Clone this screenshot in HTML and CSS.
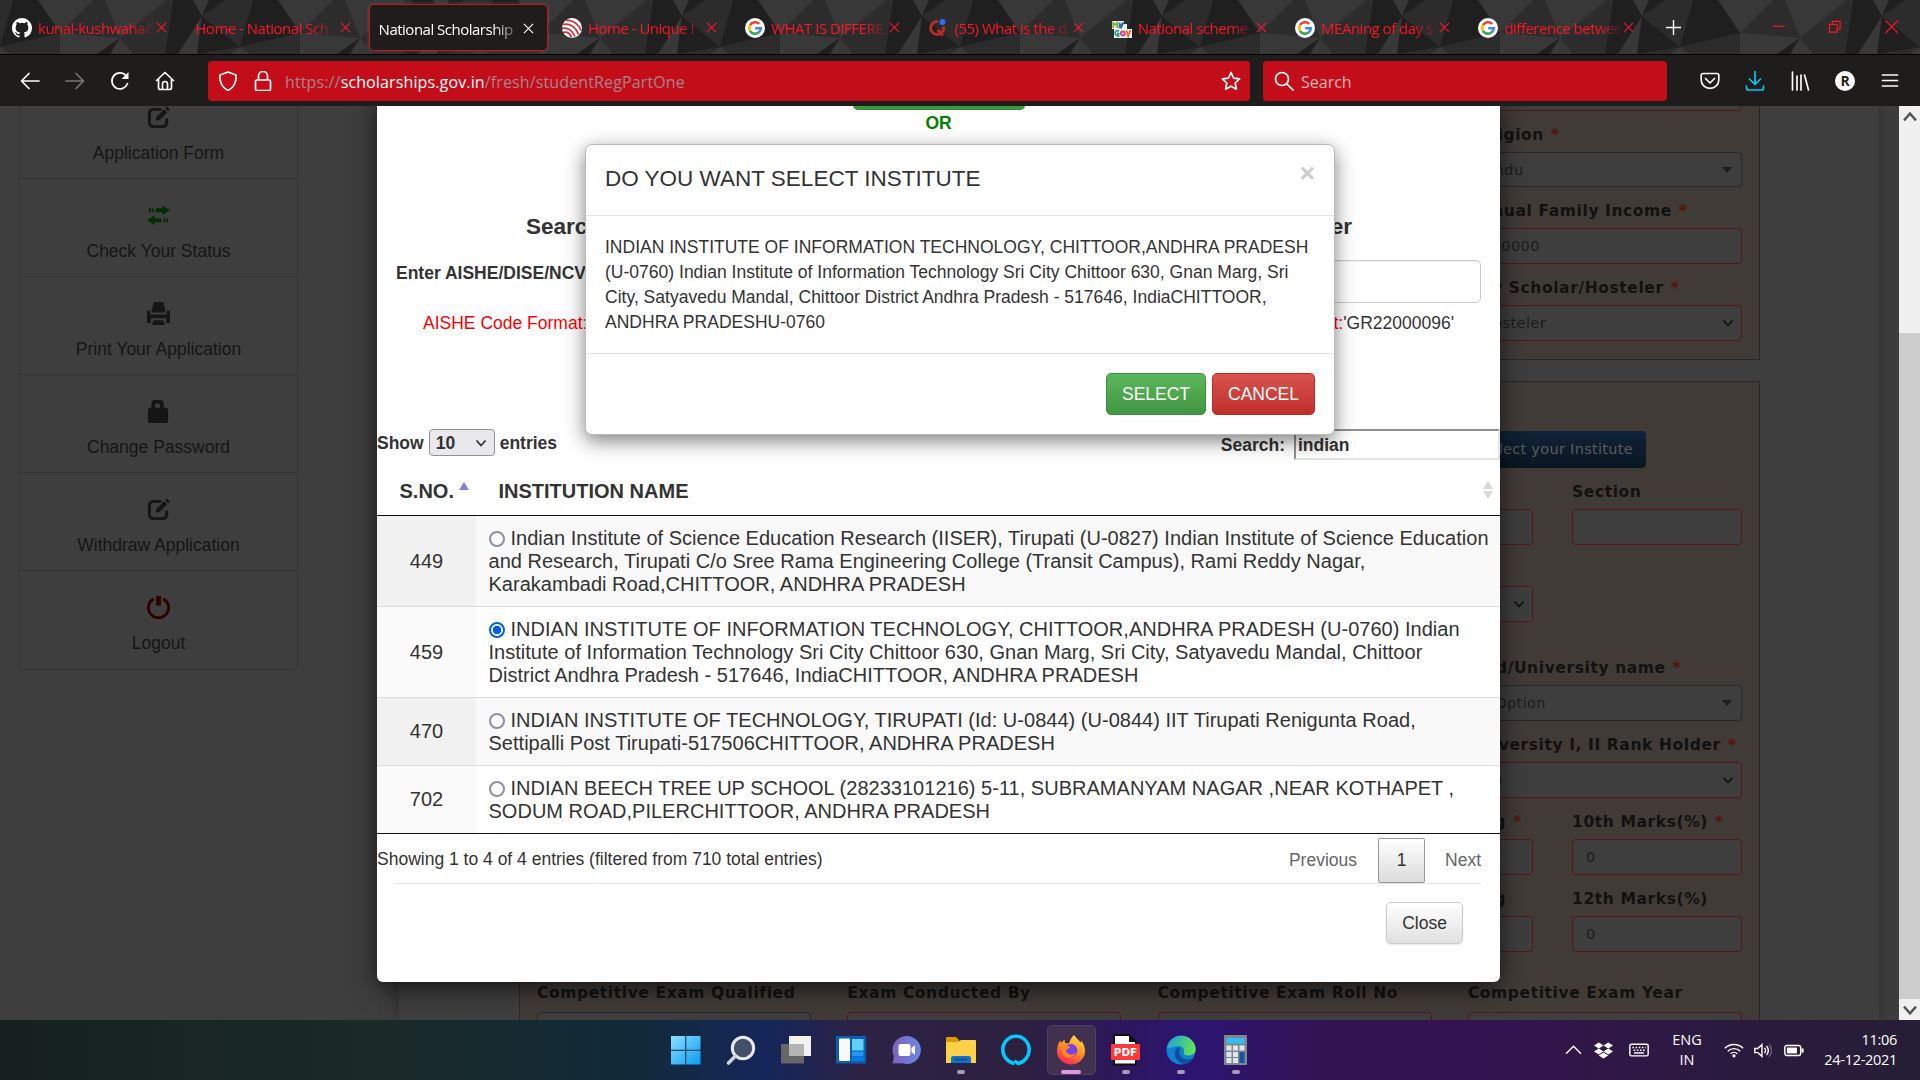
FILE: index.html
```html
<!DOCTYPE html>
<html lang="en">
<head>
<meta charset="utf-8">
<title>National Scholarship Portal</title>
<link rel="stylesheet" href="styles.css">
</head>
<body>
<svg class="defs" width="0" height="0">
  <defs>
    <symbol id="x" viewBox="0 0 12 12"><path d="M1 1l10 10M11 1L1 11" fill="none" stroke="currentColor" stroke-width="1.2"/></symbol>
    <symbol id="google" viewBox="0 0 20 20"><circle cx="10" cy="10" r="10" fill="#fff"/><g fill="none" stroke-width="2.6"><path d="M14.2 5.9A5.8 5.8 0 0 0 5 7.2" stroke="#ea4335"/><path d="M5 7.2a5.8 5.8 0 0 0 0 5.6" stroke="#fbbc05"/><path d="M5 12.8a5.8 5.8 0 0 0 8.8 1.5" stroke="#34a853"/><path d="M13.8 14.3a5.8 5.8 0 0 0 2-4.1h-5.6" stroke="#4285f4"/></g></symbol>
    <symbol id="edit" viewBox="0 0 24 24"><path d="M15 3.5H6.5a4 4 0 0 0-4 4v10a4 4 0 0 0 4 4h10a4 4 0 0 0 4-4V13" fill="none" stroke="currentColor" stroke-width="3"/><path d="M9 15.5l1-4.2 7.800-7.800 3.200 3.200-7.800 7.800zM19 2.300L20.800.6l3 3L22 5.500z" fill="currentColor"/></symbol>
    <symbol id="chev" viewBox="0 0 12 12"><path d="M1.500 3.500L6 8.500l4.500-5" fill="none" stroke="currentColor" stroke-width="1.800"/></symbol>
    <pattern id="poly" x="60" y="0" width="240" height="54" patternUnits="userSpaceOnUse">
      <rect width="240" height="54" fill="#2c2c2c"/>
      <path fill="#383838" d="M240 33L218 0h22zM0 33V0h33zM0 33l60 5-23 16H0zM45 0h61L60 38zM60 38L50 54h23zM142 16l-5 38h-19zM133 0h16l-7 16zM180 47l10 7h-20z"/>
      <path fill="#1f1f1f" d="M60 38L37 54h13zM113 0h20l9 16-24 38h-13zM149 0h16l-23 16zM142 16l38 31-43 7zM193 0h25l22 33-60 14z"/>
    </pattern>
  </defs>
</svg>

<div class="tabstrip">
  <svg class="facets" width="1920" height="54"><rect width="1920" height="54" fill="url(#poly)"/></svg>
  <div class="tabs">
    <div class="tab"><svg class="fav" viewBox="0 0 16 16"><path fill="#fff" d="M8 0C3.600 0 0 3.600 0 8c0 3.500 2.300 6.500 5.500 7.600.4.100.5-.2.5-.4V13.800c-2.200.5-2.700-1-2.700-1-.4-.9-.9-1.200-.9-1.200-.7-.5.1-.5.100-.5.800.1 1.200.8 1.200.8.700 1.300 1.900.9 2.300.7.100-.5.300-.9.500-1.100C4.700 11.300 2.900 10.600 2.900 7.500c0-.9.300-1.600.8-2.100-.1-.2-.4-1 .1-2.100 0 0 .7-.2 2.200.8a7.500 7.500 0 0 1 4 0c1.500-1 2.200-.8 2.200-.8.400 1.100.2 1.900.1 2.100.5.600.8 1.300.8 2.100 0 3.100-1.900 3.700-3.600 3.900.300.300.5.800.5 1.500v2.200c0 .2.100.5.500.4A8 8 0 0 0 16 8c0-4.400-3.600-8-8-8z"/></svg><span class="name">kunal-kushwaha/l</span><svg class="tx"><use href="#x"/></svg></div>
    <div class="tab"><span class="name">Home - National Sch</span><svg class="tx"><use href="#x"/></svg></div>
    <div class="tab active"><span class="name">National Scholarship</span><svg class="tx"><use href="#x"/></svg></div>
    <div class="tab"><svg class="fav" viewBox="0 0 20 20"><circle cx="10" cy="10" r="10" fill="#fff"/><g fill="none" stroke="#d42a36" stroke-width="1.700"><path d="M4 2.500c7-1 13 4 15 10"/><path d="M1 6.500c7-2 13 3 15.500 10"/><path d="M0 10.500c6-2 11 3 13 8"/><path d="M1 14.500c4-1 7 1 8.500 5"/></g></svg><span class="name">Home - Unique I</span><svg class="tx"><use href="#x"/></svg></div>
    <div class="tab"><svg class="fav"><use href="#google"/></svg><span class="name">WHAT IS DIFFERE</span><svg class="tx"><use href="#x"/></svg></div>
    <div class="tab"><svg class="fav" viewBox="0 0 20 20"><path d="M10 3.500a6.500 6.500 0 1 0 5.500 5M9.500 12l5.500 5.500" fill="none" stroke="#b92b27" stroke-width="3"/><circle cx="14.500" cy="4" r="3" fill="#2e69ff"/></svg><span class="name">(55) What is the d</span><svg class="tx"><use href="#x"/></svg></div>
    <div class="tab"><svg class="fav" viewBox="0 0 20 20"><path d="M0 3h12v3h3v5h5v9H2v-9H0z" fill="#f4f4f4"/><g fill="none" stroke-width="1.800"><path d="M1.200 10V4.800l2 2 2-2V10" stroke="#7cb82f"/><path d="M7.500 4.500v4l4-4-3 6" stroke="#2b6fb5"/><path d="M7 13c-5-2-5 5-.5 5V15.500H5" stroke="#19a98b"/><circle cx="10.800" cy="15.500" r="2" stroke="#e6358b"/><path d="M14.500 12.500l1.700 5.500 2.300-6" stroke="#f26522"/></g></svg><span class="name">National scheme</span><svg class="tx"><use href="#x"/></svg></div>
    <div class="tab"><svg class="fav"><use href="#google"/></svg><span class="name">MEAning of day s</span><svg class="tx"><use href="#x"/></svg></div>
    <div class="tab"><svg class="fav"><use href="#google"/></svg><span class="name">difference betwee</span><svg class="tx"><use href="#x"/></svg></div>
  </div>
  <svg class="plus" viewBox="0 0 16 16"><path d="M8 0v16M0 8h16" stroke="#fff" stroke-width="1.500"/></svg>
  <div class="winctl">
    <svg viewBox="0 0 14 14"><path d="M1 6.500h12" /></svg>
    <svg viewBox="0 0 14 14"><path d="M1.500 4.500h8v8h-8zM4.500 4.500v-3h8v8h-3"/></svg>
    <svg viewBox="0 0 14 14"><path d="M.5 .5l13 13M13.500 .5l-13 13"/></svg>
  </div>
</div>

<div class="toolbar">
  <div class="navbtns">
    <svg viewBox="0 0 20 20"><path d="M19 10H2M9 2.500L1.500 10 9 17.500"/></svg>
    <svg class="off" viewBox="0 0 20 20"><path d="M1 10h17M11 2.500l7.500 7.500-7.500 7.500"/></svg>
    <svg viewBox="0 0 20 20"><path d="M17.500 12.500A8 8 0 1 1 16 4.700"/><path d="M18.500 1v7h-7z" fill="#fbfbfe" stroke="none"/></svg>
    <svg viewBox="0 0 20 20"><path d="M1.500 9.500L10 1.500l8.500 8M3.500 8v8.500a2 2 0 0 0 2 2h9a2 2 0 0 0 2-2V8M7.500 18v-5a2.500 2.500 0 0 1 5 0v5"/></svg>
  </div>
  <div class="urlbar">
    <svg viewBox="0 0 20 20"><path d="M10 1l8 3c.5 6-1.500 12-8 15.500C3.500 16 1.500 10 2 4z"/></svg>
    <svg viewBox="0 0 20 20"><path d="M4 9h12a1.500 1.500 0 0 1 1.500 1.500V18a1.500 1.500 0 0 1-1.500 1.500H4A1.500 1.500 0 0 1 2.500 18v-7.500A1.500 1.500 0 0 1 4 9zM5.500 9V5a4.500 4.500 0 0 1 9 0v4"/></svg>
    <span class="url">https://<b>scholarships.gov.in</b>/fresh/studentRegPartOne</span>
    <svg viewBox="0 0 20 20"><path d="M10 1.500l2.600 5.600 6 .7-4.400 4.200 1.200 6.200-5.400-3-5.400 3L5.800 12 1.400 7.800l6-.7z"/></svg>
  </div>
  <div class="searchbar">
    <svg viewBox="0 0 20 20"><circle cx="8" cy="8" r="6.500"/><path d="M12.800 12.800L19 19"/></svg><span>Search</span>
  </div>
  <div class="tools">
    <svg viewBox="0 0 20 20"><path d="M3 2.500h14a1.800 1.800 0 0 1 1.800 1.800V9a8.800 8.300 0 0 1-17.600 0V4.300A1.800 1.800 0 0 1 3 2.500zM5.500 7.500L10 12l4.500-4.500"/></svg>
    <svg class="dl" viewBox="0 0 20 20"><path d="M10 0v13M4.500 8l5.500 5.500L15.500 8M1.500 15v2a2 2 0 0 0 2 2h13a2 2 0 0 0 2-2v-2"/></svg>
    <svg viewBox="0 0 20 20"><path d="M2.500 1v18M7 5v14M11 4v15M14.500 4l4 15"/></svg>
    <span class="avatar">R</span>
    <svg viewBox="0 0 20 20"><path d="M2.500 4h15M2.500 9.500h15M2.500 15h15"/></svg>
  </div>
</div>

<div class="viewport">
  <div class="page">
    <nav class="side">
      <a><svg><use href="#edit"/></svg>Application Form</a>
      <a><svg class="green" viewBox="0 0 24 24"><path fill="currentColor" d="M2 4.500h2v4H2zM5 4.500h2v4H5zM9 4.500h7V1.500l8 5-8 5v-3H9zM20 15h2v4h-2zM17 15h2v4h-2zM15 15H8v-3l-8 5L8 22v-3h7z"/></svg>Check Your Status</a>
      <a><svg viewBox="0 0 24 24"><path fill="currentColor" d="M7 0h10l2 8v3H5V8zM0 9h3.500v4h17V9H24v13h-4v-5H4v5H0zM7 19h10l2 5H5z"/></svg>Print Your Application</a>
      <a><svg viewBox="0 0 24 24"><path fill="currentColor" d="M1 10a2 2 0 0 1 2-2h1.500V4a4 4 0 0 1 4-4h5a4 4 0 0 1 4 4v4H20a2 2 0 0 1 2 2v12a2 2 0 0 1-2 2H3a2 2 0 0 1-2-2zM8.500 8h5V4h-5z"/></svg>Change Password</a>
      <a><svg><use href="#edit"/></svg>Withdraw Application</a>
      <a><svg class="red" viewBox="0 0 24 24"><path fill="none" stroke="currentColor" stroke-width="3" d="M7 3a10.500 10.500 0 1 0 10 0"/><path fill="currentColor" d="M9.500 0h5v10h-5z"/></svg>Logout</a>
    </nav>
    <main class="panel">
      <section class="box first">
        <div class="col">
          <div class="in"></div>
          <label>Religion <i>*</i></label>
          <div class="in grey">Hindu<span class="tri"></span></div>
          <label>Annual Family Income <i>*</i></label>
          <div class="in">300000</div>
          <label>Day Scholar/Hosteler <i>*</i></label>
          <div class="in">Hosteler<svg><use href="#chev"/></svg></div>
        </div>
      </section>
      <section class="box second">
        <div class="wide">
          <span class="blue">Select your Institute</span>
          <div class="pair"><div><label>Course</label><div class="in"></div></div><div><label>Section</label><div class="in"></div></div></div>
          <div class="pair lone"><div class="in"><svg><use href="#chev"/></svg></div></div>
          <div class="inner">
            <label class="board">Board/University name <i>*</i></label>
            <div class="in grey opt">Select Option<span class="tri"></span></div>
            <label>University I, II Rank Holder <i>*</i></label>
            <div class="in">No<svg><use href="#chev"/></svg></div>
          </div>
          <div class="pair"><div><label>Year of Passing <i>*</i></label><div class="in"></div></div><div><label>10th Marks(%) <i>*</i></label><div class="in">0</div></div></div>
          <div class="pair"><div><label>Year of Passing</label><div class="in"></div></div><div><label>12th Marks(%)</label><div class="in">0</div></div></div>
        </div>
        <div class="exam">
          <div><label>Competitive Exam Qualified</label><div class="in grey"></div></div>
          <div><label>Exam Conducted By</label><div class="in"></div></div>
          <div><label>Competitive Exam Roll No</label><div class="in"></div></div>
          <div><label>Competitive Exam Year</label><div class="in"></div></div>
        </div>
      </section>
    </main>
  </div>

  <div class="scroll">
    <svg><use href="#chev" transform="rotate(180 8 8)"/></svg>
    <div class="thumb"></div>
    <svg><use href="#chev"/></svg>
  </div>

  <div class="modal">
    <div class="greenbtn"></div>
    <div class="or">OR</div>
    <div class="split heading"><span>Searc</span><span>er</span></div>
    <div class="split enter"><b>Enter AISHE/DISE/NCV</b><div class="code"></div></div>
    <div class="split format"><span class="r">AISHE Code Format:</span><span><span class="r">t:</span>'GR22000096'</span></div>
    <div class="controls">
      <div class="show"><span class="dn">Show</span><span class="sel"><span class="dn">10</span><svg><use href="#chev"/></svg></span><span class="dn">entries</span></div>
      <div class="find"><span class="dn">Search:</span><span class="q">indian</span></div>
    </div>
    <div class="table">
      <div class="th"><div class="c1">S.NO.<span class="up"></span></div><div class="c2">INSTITUTION NAME<svg viewBox="0 0 10 20"><path d="M5 1l5 8H0zM5 19l5-8H0z" fill="#d8d8d8"/></svg></div></div>
      <div class="tr odd"><div class="c1">449</div><div class="c2"><span class="radio"></span>Indian Institute of Science Education Research (IISER), Tirupati (U-0827) Indian Institute of Science Education<br>and Research, Tirupati C/o Sree Rama Engineering College (Transit Campus), Rami Reddy Nagar,<br>Karakambadi Road,CHITTOOR, ANDHRA PRADESH</div></div>
      <div class="tr"><div class="c1">459</div><div class="c2"><span class="radio on"></span>INDIAN INSTITUTE OF INFORMATION TECHNOLOGY, CHITTOOR,ANDHRA PRADESH (U-0760) Indian<br>Institute of Information Technology Sri City Chittoor 630, Gnan Marg, Sri City, Satyavedu Mandal, Chittoor<br>District Andhra Pradesh - 517646, IndiaCHITTOOR, ANDHRA PRADESH</div></div>
      <div class="tr odd two"><div class="c1">470</div><div class="c2"><span class="radio"></span>INDIAN INSTITUTE OF TECHNOLOGY, TIRUPATI (Id: U-0844) (U-0844) IIT Tirupati Renigunta Road,<br>Settipalli Post Tirupati-517506CHITTOOR, ANDHRA PRADESH</div></div>
      <div class="tr two"><div class="c1">702</div><div class="c2"><span class="radio"></span>INDIAN BEECH TREE UP SCHOOL (28233101216) 5-11, SUBRAMANYAM NAGAR ,NEAR KOTHAPET ,<br>SODUM ROAD,PILERCHITTOOR, ANDHRA PRADESH</div></div>
    </div>
    <div class="info"><span>Showing 1 to 4 of 4 entries (filtered from 710 total entries)</span><div class="pager"><span>Previous</span><span class="cur">1</span><span>Next</span></div></div>
    <div class="foot"><span class="close">Close</span></div>
  </div>

  <div class="confirm">
    <div class="chead"><span>DO YOU WANT SELECT INSTITUTE</span><span class="times">×</span></div>
    <div class="cbody">INDIAN INSTITUTE OF INFORMATION TECHNOLOGY, CHITTOOR,ANDHRA PRADESH<br>(U-0760) Indian Institute of Information Technology Sri City Chittoor 630, Gnan Marg, Sri<br>City, Satyavedu Mandal, Chittoor District Andhra Pradesh - 517646, IndiaCHITTOOR,<br>ANDHRA PRADESHU-0760</div>
    <div class="cfoot"><span class="btn ok">SELECT</span><span class="btn no">CANCEL</span></div>
  </div>
</div>

<div class="taskbar">
  <div class="apps">
    <div class="app"><svg viewBox="0 0 30 30"><defs><linearGradient id="w" x1="0" y1="0" x2="1" y2="1"><stop offset="0" stop-color="#8be0ff"/><stop offset="1" stop-color="#0a9bf5"/></linearGradient></defs><path fill="url(#w)" d="M0 1h14.300v13.800H0zM15.300 1h14.200v13.800H15.300zM0 15.800h14.300v13.700H0zM15.300 15.800h14.200v13.700H15.300z"/></svg></div>
    <div class="app"><svg viewBox="0 0 30 30"><circle cx="17" cy="13" r="10.700" fill="#44506a" stroke="#e8eaee" stroke-width="3"/><path d="M9.500 21L2.500 28" stroke="#d0d3d8" stroke-width="3.600" stroke-linecap="round"/></svg></div>
    <div class="app"><svg viewBox="0 0 30 30"><path d="M0 9h23v19.500H0z" fill="#666"/><path d="M8 1h22v20H8z" fill="#f2f2f2"/><path d="M8 9h15v12H8z" fill="#b4b4b4"/></svg></div>
    <div class="app"><svg viewBox="0 0 30 30"><path d="M0 1h30v27.500H0z" fill="#0f5fb0"/><rect x="3" y="3.500" width="11" height="22.500" rx="1" fill="#f7f9fb"/><path d="M16 4h11.500v11.500H16z" fill="#62d0ff"/><path d="M16 16.500h11.500v4.500H16z" fill="#2298f5"/><path d="M16 21.500h11.500V26H16z" fill="#067de6"/></svg></div>
    <div class="app"><svg viewBox="0 0 30 30"><defs><linearGradient id="t" x1="0" y1="0" x2="1" y2="0"><stop offset="0" stop-color="#7f62b8"/><stop offset="1" stop-color="#6a86e6"/></linearGradient></defs><path d="M15.500 1a14 14 0 1 1-4 27.300L1.500 28.500l1.500-7A14 14 0 0 1 15.500 1z" fill="url(#t)"/><rect x="7.500" y="9" width="12" height="12" rx="2" fill="#fff"/><path d="M20.500 13l3.500-3v10l-3.500-3z" fill="#fff"/></svg></div>
    <div class="app run"><svg viewBox="0 0 30 30"><path d="M0 3a1 1 0 0 1 1-1h9l3 3v5H0z" fill="#dd9a06"/><path d="M0 7h12l3-2h14a1 1 0 0 1 1 1v22H0z" fill="#ffd04a"/><path d="M5 28v-5a2 2 0 0 1 2-2h16a2 2 0 0 1 2 2v5z" fill="#1272c4"/><path d="M9 24.500h12" stroke="#0b4a86" stroke-width="1.500"/></svg></div>
    <div class="app"><svg viewBox="0 0 30 30"><path d="M13.500 28.500C6 27 1.800 21 1.800 14.500a13.200 13.200 0 0 1 26.400 0C28.200 21 24 27 17 28.500c-1.500-1-2.500-2-3.500-2.500" fill="none" stroke="#05c8ff" stroke-width="3.500"/></svg></div>
    <div class="app run sel-app"><svg viewBox="0 0 30 30"><defs><linearGradient id="f" x1=".8" y1="0" x2=".3" y2="1"><stop offset="0" stop-color="#ffe14a"/><stop offset=".45" stop-color="#ff9a1f"/><stop offset="1" stop-color="#ff2058"/></linearGradient></defs><path d="M18 0c2 3 5 5 6.500 7.500 1 0 .5-2 .5-2C27.500 8.500 29 12 29 16a14 13.500 0 0 1-28 0C1 11.500 2.500 7.500 4.500 5.500L5 8l3.500-3.500L9 8l4 .5C14 5 15.500 2 18 0z" fill="url(#f)"/><circle cx="15" cy="15.500" r="6.500" fill="#7a3ff0"/><path d="M7 11c3-2 6 0 7 1-1 2-4 2-4 4 1 4 7 5 10 1-1 6-12 8-14 0z" fill="#ff8a1a"/></svg></div>
    <div class="app run"><svg viewBox="0 0 30 30"><path d="M3 0h15l7 7v22.500H3z" fill="#fff" stroke="#111" stroke-width="2"/><path d="M18 0v7h7z" fill="#111"/><rect x="0" y="9" width="29" height="16" rx="1" fill="#fb3b3b"/><text x="14.500" y="21" class="pdf">PDF</text></svg></div>
    <div class="app run"><svg viewBox="0 0 30 30"><defs><linearGradient id="e1" x1="0" y1="0" x2="1" y2=".3"><stop offset="0" stop-color="#1b9be0"/><stop offset="1" stop-color="#62e05a"/></linearGradient></defs><circle cx="15" cy="15" r="14.500" fill="#0f7fd0"/><path d="M1 13a14.500 14.500 0 0 1 28.700.5c.3 4-2.700 7-7 7-4 0-5.700-1.500-4.700-4 1-4-4-6.500-8-5-4 1-7 2-9 1.500z" fill="url(#e1)"/><path d="M12 12c-6 5-3 15 6 17 4 0 8-3 10-6-9 4-17-1-14-9z" fill="#0d4f9c"/></svg></div>
    <div class="app run"><svg viewBox="0 0 30 30"><rect x="3" y="0" width="23" height="30" rx="1" fill="#7c8790"/><path d="M5.500 3h18v5.500h-18z" fill="#35bdf2"/><path d="M5.500 10.500h5v5h-5zM12 10.500h5v5h-5zM18.500 10.500h5v5h-5zM5.500 17h5v5h-5zM12 17h5v5h-5zM5.500 23h5v5h-5zM12 23h5v5h-5z" fill="#dfe5ea"/><path d="M18.500 17h5v11h-5z" fill="#14559c"/></svg></div>
  </div>
  <div class="tray">
    <svg class="chv" viewBox="0 0 20 12"><path d="M1 10.500L10 1.500l9 9"/></svg>
    <svg class="dbx" viewBox="0 0 24 20"><path fill="#fff" stroke="none" d="M6 0l6 3.800-6 3.800L0 3.800zM18 0l6 3.800-6 3.800-6-3.800zM0 11.300l6-3.700 6 3.700L6 15zM18 7.600l6 3.700-6 3.700-6-3.700zM6 16.200l6-3.800 6 3.800-6 3.800z"/></svg>
    <svg class="kbd" viewBox="0 0 24 16"><rect x="1" y="1" width="22" height="14" rx="2"/><path d="M4 5h16" stroke-dasharray="2 1.800"/><path d="M5.500 8.200h14" stroke-dasharray="2 1.800"/><path d="M6 11.500h12"/></svg>
    <div class="lang">ENG<br>IN</div>
    <svg class="wifi" viewBox="0 0 24 18"><path d="M1 7a15.500 15.500 0 0 1 22 0M4.500 10.500a10.500 10.500 0 0 1 15 0M8 13.500a5.700 5.700 0 0 1 8 0"/><circle cx="12" cy="16" r="2" fill="#fff" stroke="none"/></svg>
    <svg class="vol" viewBox="0 0 24 18"><path d="M1 6.500h3.500L9.500 2v14l-5-4.500H1zM12.500 6a4 4 0 0 1 0 6M15 3.500a8 8 0 0 1 0 11"/><path d="M18 1.500a11 11 0 0 1 0 15" opacity=".3"/></svg>
    <svg class="bat" viewBox="0 0 24 16"><rect x="1" y="2" width="19" height="12" rx="2.500"/><path d="M3.500 4.500h12v7h-12z" fill="#fff" stroke="none"/><path d="M21 5.500h2.500v5H21z" fill="#fff" stroke="none"/></svg>
    <div class="clock">11:06<br>24-12-2021</div>
  </div>
</div>
</body>
</html>
```
FILE: styles.css
```css
* { box-sizing: border-box; }
body { margin: 0; width: 1920px; height: 1080px; overflow: hidden; background: #3e3e3e; font-family: "Liberation Sans", Arial, sans-serif; font-size: 17.5px; color: #333; display: flex; flex-direction: column; }
.defs { position: absolute; }

/* Browser tabs */
.tabstrip { position: relative; height: 55px; border-bottom: 1px solid #000; background: #2c2c2c; display: flex; flex: none; font-family: "Open Sans", "Noto Sans", sans-serif; }
.facets { position: absolute; left: 0; top: 0; }
.tabs { position: relative; display: flex; }
.tab { width: 183.3px; height: 55px; padding: 0 16px 0 12px; display: flex; align-items: center; color: #fb1526; font-size: 15px; }
.tab .fav { width: 20px; height: 20px; margin-right: 6px; flex: none; }
.tab .name { flex: 1; overflow: hidden; white-space: nowrap; letter-spacing: -.5px; -webkit-mask-image: linear-gradient(90deg, #000 80%, rgba(0,0,0,.1)); mask-image: linear-gradient(90deg, #000 80%, rgba(0,0,0,.1)); }
.tab .tx { width: 11px; height: 11px; margin-left: 2px; flex: none; }
.tab.active { background: #1e1d1b; border: 1px solid #d0101e; border-radius: 5px; color: #fff; height: 47px; margin: 4px 2px 0; width: 179.300px; padding: 2px 13px 0 9px; box-shadow: 0 0 4px #6668; }
.plus { position: relative; width: 15px; height: 15px; margin: 20px 0 0 16px; }
.winctl { position: relative; margin-left: auto; padding: 20px 22px 0 0; display: flex; gap: 43px; }
.winctl svg { width: 13.500px; height: 13.500px; fill: none; stroke: #fb1526; stroke-width: 1.200; }

/* Navigation toolbar */
.toolbar { height: 51px; flex: none; background: #1e1d1b; display: flex; align-items: center; font-family: "Open Sans", "Noto Sans", sans-serif; font-size: 16px; }
.toolbar svg { width: 20px; height: 20px; fill: none; stroke: #fbfbfe; stroke-width: 1.700; stroke-linejoin: round; stroke-linecap: round; flex: none; }
.toolbar .off { opacity: .4; }
.navbtns { width: 208px; display: flex; gap: 25px; padding-left: 20px; }
.urlbar { width: 1042px; height: 40px; background: #c30e1a; border-radius: 4px; display: flex; align-items: center; padding: 0 9px 0 10px; gap: 15px; }
.url { flex: 1; color: #a98288; letter-spacing: .13px; margin-left: -3px; padding-top: 3px; }
.url b { font-weight: 400; color: #fff; }
.searchbar { width: 404px; height: 40px; margin-left: 13px; background: #c30e1a; border-radius: 4px; display: flex; align-items: center; padding: 0 11px; gap: 7px; color: #f0b4b8; }
.searchbar span { padding-top: 3px; }
.tools { display: flex; gap: 25px; margin-left: 33px; align-items: center; }
.toolbar .dl { stroke: #00c8f0; }
.avatar { width: 20px; height: 20px; border-radius: 50%; background: #fff; color: #1e1d1b; font: 700 14px/20px "Open Sans", sans-serif; text-align: center; }

/* Dimmed page */
.viewport { position: relative; height: 914px; flex: none; display: flex; overflow: hidden; }
.page { width: 1899px; height: 914px; display: flex; background: #3e3e3e; overflow: hidden; }
.side { width: 279px; margin: -26px 0 0 19px; height: 590px; border: 1px solid #353535; border-radius: 5px; flex: none; }
.side a { height: 98.100px; border-bottom: 1px solid #353535; display: flex; flex-direction: column; align-items: center; padding-top: 25px; line-height: 25px; gap: 12px; color: #151515; }
.side a:last-child { border: 0; }
.side svg { width: 23px; height: 23px; }
.side .green { color: #002e00; }
.side .red { color: #2e0000; }
.panel { margin-left: 101px; width: 1480px; padding-left: 120px; box-shadow: 0 0 14px #2a2a2a; flex: none; }
.box { width: 1241px; background: #403b37; border: 1px solid #282828; padding: 0 17px; }
.first { height: 285px; margin-top: -31px; border-top: 0; margin-bottom: 21px; }
.second { height: 700px; padding-top: 49px; }
.col, .inner { width: 274px; margin-left: auto; }
label { display: block; height: 25px; white-space: nowrap; margin: 12px 0 4px; font: 700 15.500px/25px "DejaVu Sans", sans-serif; letter-spacing: .6px; color: #111; }
label.board { margin-left: -15px; }
label i { font-style: normal; color: #5c0f0b; margin-left: 1px; }
.in { height: 36px; border: 1px solid #561519; border-radius: 4px; background: #3e3e3e; padding: 0 7px 0 13px; display: flex; align-items: center; justify-content: space-between; font: 14.500px "DejaVu Sans", sans-serif; letter-spacing: .4px; color: #1c1c1c; white-space: nowrap; }
.in svg { width: 12px; height: 12px; color: #111; margin-left: auto; }
.in.grey { border-color: #272727; height: 35px; padding-left: 10px; }
.in.opt { padding-left: 0; text-indent: -26px; }
.tri { border: 5px solid transparent; border-top: 6px solid #1c1c1c; border-bottom: 0; margin-right: 2px; }
.wide { width: 380px; margin-left: auto; display: flex; flex-direction: column; }
.blue { align-self: flex-end; margin-right: 96px; width: 192px; height: 37px; border-radius: 4px; background: linear-gradient(#102338, #0a1521); color: #5c5c5c; font: 14.500px/37px "DejaVu Sans", sans-serif; letter-spacing: .3px; text-align: right; padding-right: 13px; white-space: nowrap; }
.pair { display: grid; grid-template-columns: 170px 170px; gap: 39px; justify-content: end; }
.pair.lone { margin: 41px 0 22px; }
.inner .in.grey { height: 36px; }
.exam { display: grid; grid-template-columns: repeat(4, 274px); gap: 36.300px; margin-top: 19px; }
.exam label { margin-top: 10px; margin-bottom: 6px; }

.scroll { width: 21px; background: #f0f0f0; display: flex; flex-direction: column; justify-content: space-between; }
.scroll svg { width: 16px; height: 16px; margin: 3px 0 2px 3px; color: #555; flex: none; }
.scroll .thumb { height: 666px; margin-top: auto; background: #cdcdcd; flex: none; }

/* Institute search dialog */
.modal { position: absolute; left: 377px; top: -10px; width: 1123px; height: 886px; background: #fff; border-radius: 0 0 6px 6px; box-shadow: 0 6px 24px rgba(0,0,0,.65); display: flex; flex-direction: column; }
.greenbtn { width: 172px; height: 14px; margin: 0 0 0 476px; background: #419641; border-radius: 0 0 5px 5px; border-bottom: 1px solid #3b8a3b; flex: none; }
.or { text-align: center; font-weight: 700; color: #008000; line-height: 27px; height: 25px; }
.split { display: flex; justify-content: space-between; }
.heading { font-size: 22.500px; font-weight: 700; line-height: 30px; margin: 77px 148px 0 149px; }
.enter { margin: 18px 19px 0; line-height: 27px; height: 43px; }
.code { width: 400px; height: 43px; border: 1px solid #ccc; border-radius: 5px; box-shadow: inset 0 1px 1px #eee; }
.format { margin: 8px 46px 0; line-height: 25px; }
.r { color: #f00; }
.controls { display: flex; justify-content: space-between; height: 35px; margin-top: 93px; font-weight: 700; }
.show { display: flex; align-items: center; height: 27px; gap: 5px; }
.dn { padding-top: 2px; }
.sel { width: 66px; height: 27px; background: #e9e9ed; border: 1px solid #8f8f9d; border-radius: 4px; display: flex; align-items: center; justify-content: space-between; padding: 0 7px 0 6px; }
.sel svg { width: 12px; height: 12px; }
.find { display: flex; align-items: center; gap: 9px; height: 31px; }
.q { width: 206px; height: 31px; border: 2px solid; border-color: #909090 #e3e3e3 #e3e3e3 #909090; line-height: 28px; padding-left: 2px; }
.table { font-size: 20px; line-height: 23px; }
.th { display: flex; height: 52px; font-weight: 700; border-bottom: 1px solid #111; align-items: center; padding-top: 3px; }
.th .c1 { width: 99px; padding-left: 22.500px; display: flex; gap: 5px; }
.th .c2 { padding: 0 7px 0 22.500px; flex: 1; display: flex; justify-content: space-between; }
.th svg { width: 10px; height: 20px; }
.up { border: 5px solid transparent; border-bottom: 8px solid #8080e0; border-top: 0; height: 8px; margin-top: 2px; }
.tr { display: flex; height: 91px; border-bottom: 1px solid #ddd; }
.tr.two { height: 68px; }
.tr:last-child { border-color: #111; }
.tr .c1 { width: 99px; background: #fafafa; display: flex; align-items: center; justify-content: center; }
.tr .c2 { flex: 1; padding: 11px 0 0 12.500px; white-space: nowrap; letter-spacing: .018px; }
.odd .c1 { background: #f1f1f1; }
.odd .c2 { background: #f9f9f9; }
.radio { display: inline-block; width: 16px; height: 16px; border-radius: 50%; border: 2px solid #8f8f9d; background: #fff; margin-right: 6px; vertical-align: -2px; }
.radio.on { border-color: #0060df; background: radial-gradient(#0060df 0 4px, #fff 4.500px); }
.info { display: flex; justify-content: space-between; height: 49px; line-height: 50px; }
.pager { display: flex; color: #666; margin-right: 19px; padding-top: 4px; }
.pager span { line-height: 44px; }
.pager .cur { width: 47px; height: 45px; margin: 0 20px 0 21px; text-align: center; border: 1px solid #979797; border-radius: 2px; background: linear-gradient(#fff, #dcdcdc); color: #333; line-height: 42px; }
.foot { margin: 0 19px; border-top: 1px solid #e5e5e5; padding: 18px 18px 0 0; display: flex; justify-content: flex-end; }
.close { width: 77px; height: 42px; border: 1px solid #ccc; border-radius: 5px; line-height: 41px; text-align: center; background: linear-gradient(#fff, #e0e0e0); box-shadow: 0 1px 2px rgba(0,0,0,.1); }

/* Confirmation dialog */
.confirm { position: absolute; left: 585px; top: 38px; width: 750px; height: 291px; background: #fff; border: 1px solid #bbb; border-radius: 7px; box-shadow: 0 6px 19px rgba(0,0,0,.5); display: flex; flex-direction: column; }
.chead { height: 71px; border-bottom: 1px solid #e5e5e5; display: flex; justify-content: space-between; padding: 18px 19px 0; font-size: 22.500px; line-height: 32px; }
.times { font-size: 26px; line-height: 20px; font-weight: 700; color: #ccc; }
.cbody { height: 138px; border-bottom: 1px solid #e5e5e5; padding: 19px 0 0 19px; line-height: 25px; white-space: nowrap; letter-spacing: .01px; }
.cfoot { display: flex; justify-content: flex-end; gap: 6px; padding: 19px 19px 0; }
.btn { height: 42px; width: 100px; border-radius: 5px; color: #fff; text-align: center; line-height: 41px; border: 1px solid #3e8f3e; }
.ok { background: linear-gradient(#5cb85c, #419641); }
.no { width: 103px; background: linear-gradient(#d9534f, #c12e2a); border-color: #b92c28; }

/* Windows taskbar */
.taskbar { height: 60px; flex: none; display: flex; padding-left: 659px; color: #fff; font-family: "Open Sans", "Noto Sans", sans-serif; background: linear-gradient(90deg, #15201f 0, #1b2a27 370px, #112a3a 640px, #15265a 765px, #2b2244 860px, #2d2040 1020px, #2c1858 1110px, #2c1472 1190px, #331452 1330px, #34144f 1500px, #2c1a40 1700px, #251e36 1920px); }
.apps { display: flex; }
.app { width: 54.950px; display: flex; flex-direction: column; align-items: center; padding-top: 15px; height: 60px; }
.app svg { width: 30px; height: 30px; overflow: visible; }
.run::after { content: ""; width: 8px; height: 4px; border-radius: 2px; background: #a79ab8; margin-top: 5px; }
.sel-app { background: #41304f; border: 1px solid #504060; border-radius: 5px; width: 49px; margin: 5px 3px 0; height: 50px; padding-top: 9px; }
.sel-app::after { width: 20px; background: #d99ae0; }
.pdf { font: 700 10.500px "DejaVu Sans", sans-serif; fill: #fff; text-anchor: middle; }
.tray { margin-left: auto; display: flex; align-items: center; padding-right: 23px; font-size: 14.500px; line-height: 20px; }
.tray svg { fill: none; stroke: #fff; stroke-width: 1.700; }
.chv { width: 17px; height: 10px; margin-right: 12px; }
.dbx { width: 19px; height: 17px; margin-right: 16px; }
.kbd { width: 20px; height: 14px; margin-right: 23px; }
.lang { text-align: center; width: 30px; margin-right: 22px; }
.wifi { width: 20px; height: 16px; margin-right: 10px; }
.vol { width: 20px; height: 15px; margin-right: 10px; }
.bat { width: 20px; height: 15px; margin-right: 20px; }
.clock { text-align: right; letter-spacing: -.3px; width: 73px; white-space: nowrap; }
```
